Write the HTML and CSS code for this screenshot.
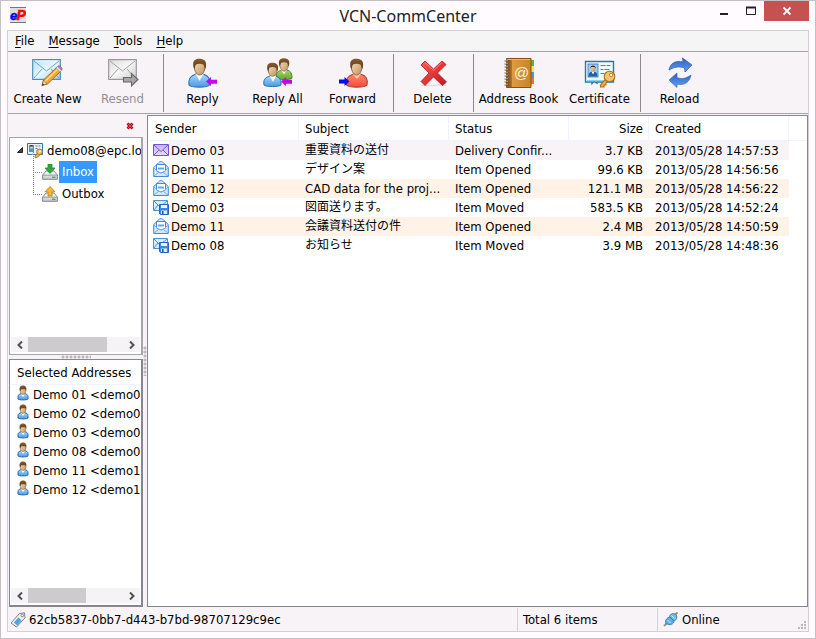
FILE: index.html
```html
<!DOCTYPE html>
<html lang="en">
<head>
<meta charset="utf-8">
<title>VCN-CommCenter</title>
<link rel="stylesheet" href="styles.css">
</head>
<body>
<svg class="sprite" aria-hidden="true">
  <defs>
    <linearGradient id="g-hair" x1="0" y1="0" x2="0" y2="1"><stop offset="0" stop-color="#8a5a2c"/><stop offset="1" stop-color="#5c3512"/></linearGradient>
    <linearGradient id="g-face" x1="0" y1="0" x2="1" y2="1"><stop offset="0" stop-color="#f4e0c0"/><stop offset="1" stop-color="#bf9460"/></linearGradient>
    <linearGradient id="g-blue" x1="0" y1="0" x2="0" y2="1"><stop offset="0" stop-color="#a8d8fa"/><stop offset="1" stop-color="#4a9ae4"/></linearGradient>
    <linearGradient id="g-green" x1="0" y1="0" x2="0" y2="1"><stop offset="0" stop-color="#a4d468"/><stop offset="1" stop-color="#68a830"/></linearGradient>
    <linearGradient id="g-red" x1="0" y1="0" x2="0" y2="1"><stop offset="0" stop-color="#ff8a70"/><stop offset="1" stop-color="#f24c34"/></linearGradient>
    <linearGradient id="g-mail" x1="0" y1="0" x2="1" y2="1"><stop offset="0" stop-color="#b8e0fa"/><stop offset=".5" stop-color="#e8f6ff"/><stop offset="1" stop-color="#a0d4f6"/></linearGradient>
    <linearGradient id="g-gray" x1="0" y1="0" x2="1" y2="1"><stop offset="0" stop-color="#dcdcdc"/><stop offset=".5" stop-color="#f6f6f6"/><stop offset="1" stop-color="#cccccc"/></linearGradient>
    <linearGradient id="g-x" x1="0" y1="0" x2="1" y2="1"><stop offset="0" stop-color="#f85c50"/><stop offset="1" stop-color="#c81420"/></linearGradient>
    <linearGradient id="g-book" x1="0" y1="0" x2="1" y2="0"><stop offset="0" stop-color="#8f5718"/><stop offset=".2" stop-color="#a8681c"/><stop offset=".22" stop-color="#dc9c44"/><stop offset="1" stop-color="#c98428"/></linearGradient>
    <linearGradient id="g-sync" x1="0" y1="0" x2="0" y2="1"><stop offset="0" stop-color="#2c5cc0"/><stop offset="1" stop-color="#60a4f0"/></linearGradient>
    <linearGradient id="g-tray" x1="0" y1="0" x2="0" y2="1"><stop offset="0" stop-color="#ffffff"/><stop offset="1" stop-color="#c4c8cc"/></linearGradient>
    <linearGradient id="g-violet" x1="0" y1="0" x2="0" y2="1"><stop offset="0" stop-color="#c4b4fa"/><stop offset="1" stop-color="#e4dcff"/></linearGradient>
  </defs>
  <symbol id="i-head" viewBox="0 0 16 16">
    <path d="M4.700 5c0-5.300 7-5 6.700.2 0 3.200-1.500 5.300-3.300 5.300S4.700 8.300 4.700 5z" fill="url(#g-face)" stroke="#8c6238" stroke-width=".6"/>
    <path d="M4.600 7C2.800 1.500 5 .1 8.200.2c4 .1 4.900 3 3.400 6.800L10.700 4C9 3.300 7.200 3.200 5.600 4z" fill="url(#g-hair)"/>
  </symbol>
  <symbol id="i-small-user" viewBox="0 0 12 16">
    <path d="M1 14V11.500c0-1.500 1.200-2.300 3-2.800h4c1.800.5 3 1.300 3 2.800V14c-1 1.200-9 1.200-10 0z" fill="url(#g-blue)" stroke="#1f66b4"/>
    <path d="M4 9L6 12 8 9z" fill="#fff"/>
    <ellipse cx="6" cy="6" rx="2.800" ry="3.600" fill="url(#g-face)" stroke="#8c6238" stroke-width=".5"/>
    <path d="M3 6.500C1.500 2 4 .6 6 .6s4.500 1.400 3 5.900L8.500 4.200H4.300z" fill="url(#g-hair)"/>
  </symbol>
  <symbol id="i-card" viewBox="0 0 32 32">
    <path d="M1.500 4.500h28v20.500H13v1l-3-1.500-2 2V25H1.500z" fill="#eef8ff" stroke="#2878ac" stroke-width="1.400"/>
    <path d="M3 23.700h24" stroke="#78c8ec"/>
    <rect x="4" y="7" width="10" height="13" fill="#9ccdf4" stroke="#3a78b0" stroke-width=".8"/>
    <path d="M4.500 19.500c0-4 2-5 4.500-5s4.500 1 4.500 5z" fill="#1c60b4"/><path d="M7.500 14.500l1.500 3 1.500-3z" fill="#fff"/>
    <ellipse cx="9" cy="11.500" rx="2.300" ry="3" fill="url(#g-face)"/><path d="M6.500 11.500c-1-4 6-4 5 0l-1-1.500h-3z" fill="#4b2c12"/>
    <path d="M16.500 8.500h5m1 0h4M16.500 12.500h3m1 0h5M16.500 16.500h4" stroke="#5583a8" stroke-width="1.200"/>
    <path d="M22.500 21l-6 7v2h3.500v-2h2v-2.200l4-2.800z" fill="#f2b24c" stroke="#a86e1c" stroke-width="1.100"/>
    <circle cx="25.500" cy="19.500" r="5.300" fill="#f8c468" stroke="#a86e1c" stroke-width="1.100"/><circle cx="27" cy="18" r="1.700" fill="#fff" stroke="#a86e1c" stroke-width=".8"/>
  </symbol>
  <symbol id="i-small-card" viewBox="0 0 16 16">
    <path d="M.5 1.500h15v11h-9l-1-.5-1 1v-.5h-4z" fill="#e4f3fd" stroke="#2878ac"/>
    <path d="M2 3h5v7H2z" fill="#4c94d8"/><circle cx="4.500" cy="5.200" r="1.500" fill="#f0cca0"/><path d="M3 4.500C3 2.500 6 2.500 6 4.500z" fill="#4b2c12"/>
    <path d="M8.500 4h2m1 0h2M8.500 6.500h2" stroke="#5583a8"/>
    <path d="M11 10.500l-3 3.500v1.500h2l3.500-3z" fill="#f2b24c" stroke="#a86e1c" stroke-width=".8"/>
    <circle cx="12.500" cy="9.800" r="2.800" fill="#f8c468" stroke="#a86e1c" stroke-width=".9"/><circle cx="13" cy="9.300" r=".9" fill="#fff"/>
  </symbol>
  <symbol id="i-opened" viewBox="0 0 16 16">
    <path d="M.7 6.500L5 2.500C6.500 0 9.500 0 11 2.500l4.300 4v9H.7z" fill="#d0e9fc" stroke="#4588d8"/>
    <path d="M3.500 3.500h9V10L8 12l-4.500-2z" fill="#fff" stroke="#4588d8"/>
    <path d="M5 6.500h6v2H5z" fill="#5ca8f0"/>
    <path d="M1 7l4.500 4.500L1 15M15 7l-4.500 4.500L15 15M5.500 11.500h5" fill="none" stroke="#78aee8"/>
  </symbol>
  <symbol id="i-moved" viewBox="0 0 16 16">
    <path d="M.5 1.500h14v10H.5z" fill="#d5ecfc" stroke="#4b94d0"/><path d="M1 2l6 6 7-6M1 11l4-5" fill="none" stroke="#4b94d0"/>
    <path d="M6.500 5.500h9v10h-8l-1-1z" fill="#3c86ec" stroke="#2860c8"/><path d="M8 6h6v3H8z" fill="#f4f8ff"/><path d="M8 11.500h6v3.500H8z" fill="#d8f0dc"/><path d="M9 12h1.500v3H9z" fill="#1c50b4"/>
  </symbol>
  <symbol id="i-new" viewBox="0 0 16 16">
    <path d="M.5 2.500h15v11H.5z" fill="url(#g-violet)" stroke="#7452d4"/><path d="M1 3l7 6.500L15 3M1 13l5-5m9 5l-5-5" fill="none" stroke="#7c5cdc"/>
  </symbol>
  <symbol id="i-tray" viewBox="0 0 16 16">
    <path d="M.6 11L4 7h8l3.400 4v4.300H.6z" fill="url(#g-tray)" stroke="#84888c"/><path d="M1 11.200h14" stroke="#9a9ea2"/><path d="M10 13.300h3.500" stroke="#48b040" stroke-width="1.400"/>
  </symbol>
  <symbol id="i-left" viewBox="0 0 10 8"><path d="M0 4l4.500-4v2.500H10v3.500H4.500V8z" fill="#c800f4"/></symbol>
</svg>

<div class="window">
  <header class="titlebar">
    <svg class="app-logo" viewBox="0 0 16 16" role="img" aria-label="eP">
      <path d="M0 0h16v16H0z" fill="#dedede"/><path d="M0 .5h16M0 15.500h16" stroke="#777"/>
      <text x="0" y="13" font-family="Liberation Sans" font-size="13" font-weight="bold" font-style="italic" fill="#00f" stroke="#00f" stroke-width=".4">e</text>
      <text x="6.500" y="13" font-family="Liberation Sans" font-size="14" font-weight="bold" font-style="italic" fill="#f00" stroke="#f00" stroke-width=".6">P</text>
    </svg>
    <h1 class="title">VCN-CommCenter</h1>
    <div class="controls">
      <button class="control" aria-label="Minimize"><svg viewBox="0 0 10 10"><path d="M1 8h8" stroke="#222" stroke-width="2"/></svg></button>
      <button class="control" aria-label="Maximize"><svg viewBox="0 0 10 10"><path d="M0 1.500h10" stroke="#222" stroke-width="2"/><path d="M.5 1v7.500h9V1" fill="none" stroke="#222"/></svg></button>
      <button class="control control-close" aria-label="Close"><svg viewBox="0 0 10 10"><path d="M1.500 1.500l7 7m0-7l-7 7" stroke="#fff" stroke-width="1.800"/></svg></button>
    </div>
  </header>

  <div class="client">
    <nav class="menubar">
      <button><u>F</u>ile</button><button><u>M</u>essage</button><button><u>T</u>ools</button><button><u>H</u>elp</button>
    </nav>

    <div class="toolbar" role="toolbar">
      <button class="tool">
        <svg viewBox="0 0 32 32"><path d="M.7 2.700h27.600v19.600H.7z" fill="url(#g-mail)" stroke="#4c8fb8" stroke-width="1.200"/><path d="M2 4l12.500 10L27 4M2 21l8-9m17 9l-8-9" fill="none" stroke="#5d9ec4" stroke-width=".9"/><path d="M3.200 4h23" stroke="#fff" opacity=".7"/>
          <path d="M10 28.500l1.500-5.500L25 10l4 4-13.500 13z" fill="#f7a52c" stroke="#9a6420" stroke-width=".9"/><path d="M13 24.500L26.500 11.500" stroke="#ffd98a" stroke-width="1.500"/><path d="M10 28.500l1.500-5.300 3.600 3.600z" fill="#f8dcb0" stroke="#74512a" stroke-width=".6"/><path d="M10 28.500l.7-2.200 1.500 1.500z" fill="#333"/><path d="M24 11l1.800-1.800 4 4L28 15z" fill="#d4dce4" stroke="#828a94" stroke-width=".5"/><path d="M25.800 9.200c1.600-1.600 5.600 2 4 4z" fill="#d878b0" stroke="#9c5880" stroke-width=".7"/></svg>
        Create New</button>
      <button class="tool" disabled>
        <svg viewBox="0 0 32 32"><path d="M1.700 2.700h27.600v19.600H1.700z" fill="url(#g-gray)" stroke="#999" stroke-width="1.200"/><path d="M3 4l12.500 10L28 4M3 21l8-9m17 9l-8-9" fill="none" stroke="#999" stroke-width=".9"/><path d="M16.500 20.500h8v-4l6.500 6-6.500 6.500v-4h-8z" fill="#a6a6a6" stroke="#666" stroke-width="1.100"/></svg>
        Resend</button>
      <span class="divider"></span>
      <button class="tool">
        <svg viewBox="0 0 32 32"><path d="M2 28c-1-6 1-9 7-11h7c6 2 7.500 5 6.500 11-2 2.800-18.500 2.800-20.500 0z" fill="url(#g-blue)" stroke="#2870b4" stroke-width="1.100"/><path d="M8.500 17l4 7 4-7z" fill="#fff" stroke="#b0cfe8" stroke-width=".5"/><use href="#i-head" x="0" y="1" width="25" height="26"/><use href="#i-left" x="19" y="20" width="11" height="9"/></svg>
        Reply</button>
      <button class="tool">
        <svg viewBox="0 0 32 32"><path d="M14 21c0-5 2-7 6-8h5c4 1 5 4 5 8-1 2-14 2-16 0z" fill="url(#g-green)" stroke="#4c8424"/><path d="M19 12.500l3 5 3-5z" fill="#fff"/><use href="#i-head" x="12" y="1" width="20" height="20"/><path d="M2 28c-1-5 1-7.500 6-9h5c5 1.500 6.500 4 6 9-2 2-15 2-17 0z" fill="url(#g-blue)" stroke="#2870b4"/><path d="M8 19l3 6 3-6z" fill="#fff"/><use href="#i-head" x="0" y="5" width="21" height="22"/><use href="#i-left" x="19" y="20" width="11" height="9"/></svg>
        Reply All</button>
      <button class="tool">
        <svg viewBox="0 0 32 32"><path d="M9.500 28c-1-6 1-9 7-11h7c6 2 7.500 5 6.500 11-2 2.800-18.500 2.800-20.500 0z" fill="url(#g-red)" stroke="#b43c2c" stroke-width="1.100"/><path d="M16 17l4 5 4-5z" fill="#ffc4b0"/><use href="#i-head" x="7" y="1" width="25" height="26"/><path d="M2 22.500h5.500V20l5 4.500-5 4.500v-2.500H2z" fill="#0808f0"/></svg>
        Forward</button>
      <span class="divider"></span>
      <button class="tool">
        <svg viewBox="0 0 32 32"><path d="M4 29c4-2 5 1 8-1 4 2 11-2 17 1" fill="none" stroke="#ddd5dc"/><path d="M4 8l4-4 8.500 8L25 4l4 3.500-8.500 8.500 9 9-4 3.500-9-8.500L8 28.500l-4-4L12 16z" fill="url(#g-x)" stroke="#b81820" stroke-width=".8"/><path d="M8 5.500l8.500 8L25 5.500" fill="none" stroke="#ff8c80" stroke-width=".9"/></svg>
        Delete</button>
      <span class="divider"></span>
      <button class="tool tool-wide">
        <svg viewBox="0 0 32 32"><path d="M27 3h4v6h-4z" fill="#54b848"/><path d="M27 9h4v6h-4z" fill="#f4dc78"/><path d="M27 15h4v6h-4z" fill="#3c9cec"/><path d="M27 21h4v6h-4z" fill="#ee7040"/><path d="M3.500 1.500h24.500v29H3.500z" fill="url(#g-book)" stroke="#8a5012"/><path d="M4.500 2.500h22.500" stroke="#ecb868"/><path d="M1.500 4h5m-5 3h5m-5 3h5m-5 3h5m-5 3h5m-5 3h5m-5 3h5m-5 3h5m-5 3h5" stroke="#54504c" stroke-width="1.100"/><path d="M2 3.300h3m-3 3h3m-3 3h3m-3 3h3m-3 3h3m-3 3h3m-3 3h3m-3 3h3m-3 3h3" stroke="#eee" stroke-width=".5"/><text x="11" y="20.500" font-family="Liberation Sans" font-size="15" fill="#fff0d4">@</text></svg>
        Address Book</button>
      <button class="tool"><svg viewBox="0 0 32 32"><use href="#i-card"/></svg>Certificate</button>
      <span class="divider"></span>
      <button class="tool">
        <svg viewBox="0 0 32 32"><path d="M5 13C6 6 12 3 19 5l-.5-4L28 8l-7 7-.5-4c-6-2-10-1-15.500 2z" fill="url(#g-sync)" stroke="#2858b0" stroke-width=".7"/><path d="M27 18c-1 7-7 11-14 9v3.500L5 23l8-7v4.500c5 2 9 1 14-2.500z" fill="url(#g-sync)" stroke="#3870c4" stroke-width=".7"/></svg>
        Reload</button>
    </div>

    <main class="content">
      <aside class="side">
        <div class="side-head"><button aria-label="Close pane"><svg viewBox="0 0 8 8"><path d="M1.500 1.500l5 5m0-5l-5 5" stroke="#a80c18" stroke-width="2.800"/><path d="M1.500 1.500l5 5m0-5l-5 5" stroke="#dc5058" stroke-width="1"/></svg></button></div>
        <section class="pane tree-pane">
          <ul class="tree">
            <li><div class="node root"><svg class="expander" viewBox="0 0 8 8"><path d="M6.500 1.500v5h-5z" fill="#444" stroke="#222"/></svg><svg class="icon" viewBox="0 0 16 16"><use href="#i-small-card"/></svg><span>demo08@epc.lo</span></div>
              <ul class="branch">
                <li class="node"><svg class="icon" viewBox="0 0 16 16"><use href="#i-tray"/><path d="M6 0h4v4h3L8 9.500 3 4h3z" fill="#30a838" stroke="#1c7c28" stroke-width=".7"/></svg><span class="label selected">Inbox</span></li>
                <li class="node"><svg class="icon" viewBox="0 0 16 16"><use href="#i-tray"/><path d="M8 .5l5 5.300h-3V10H6V5.800H3z" fill="#fbb838" stroke="#b87c18" stroke-width=".8"/></svg><span class="label">Outbox</span></li>
              </ul>
            </li>
          </ul>
          <div class="scrollbar"><button aria-label="Scroll left"><svg viewBox="0 0 8 8"><path d="M6 .5L2.500 4 6 7.500" /></svg></button><div class="track"><div class="thumb thumb-long"></div></div><button aria-label="Scroll right"><svg viewBox="0 0 8 8"><path d="M2 .5L5.500 4 2 7.500"/></svg></button></div>
        </section>
        <div class="split-row"></div>
        <section class="pane address-pane">
          <h2>Selected Addresses</h2>
          <ul class="addresses">
            <li><svg viewBox="0 0 12 16"><use href="#i-small-user"/></svg>Demo 01 &lt;demo0</li>
            <li><svg viewBox="0 0 12 16"><use href="#i-small-user"/></svg>Demo 02 &lt;demo0</li>
            <li><svg viewBox="0 0 12 16"><use href="#i-small-user"/></svg>Demo 03 &lt;demo0</li>
            <li><svg viewBox="0 0 12 16"><use href="#i-small-user"/></svg>Demo 08 &lt;demo0</li>
            <li><svg viewBox="0 0 12 16"><use href="#i-small-user"/></svg>Demo 11 &lt;demo1</li>
            <li><svg viewBox="0 0 12 16"><use href="#i-small-user"/></svg>Demo 12 &lt;demo1</li>
          </ul>
          <div class="scrollbar"><button aria-label="Scroll left"><svg viewBox="0 0 8 8"><path d="M6 .5L2.500 4 6 7.500"/></svg></button><div class="track"><div class="thumb"></div></div><button aria-label="Scroll right"><svg viewBox="0 0 8 8"><path d="M2 .5L5.500 4 2 7.500"/></svg></button></div>
        </section>
      </aside>
      <div class="split-col"></div>
      <section class="list-pane">
        <table class="mails">
          <colgroup><col class="c-sender"><col class="c-subject"><col class="c-status"><col class="c-size"><col class="c-created"><col></colgroup>
          <thead><tr><th>Sender</th><th>Subject</th><th>Status</th><th class="num">Size</th><th>Created</th><th></th></tr></thead>
          <tbody>
            <tr class="current"><td><svg viewBox="0 0 16 16"><use href="#i-new"/></svg>Demo 03</td><td lang="ja">重要資料の送付</td><td>Delivery Confir...</td><td class="num">3.7 KB</td><td>2013/05/28 14:57:53</td><td></td></tr>
            <tr><td><svg viewBox="0 0 16 16"><use href="#i-opened"/></svg>Demo 11</td><td lang="ja">デザイン案</td><td>Item Opened</td><td class="num">99.6 KB</td><td>2013/05/28 14:56:56</td><td></td></tr>
            <tr class="tinted"><td><svg viewBox="0 0 16 16"><use href="#i-opened"/></svg>Demo 12</td><td>CAD data for the proj...</td><td>Item Opened</td><td class="num">121.1 MB</td><td>2013/05/28 14:56:22</td><td></td></tr>
            <tr><td><svg viewBox="0 0 16 16"><use href="#i-moved"/></svg>Demo 03</td><td lang="ja">図面送ります。</td><td>Item Moved</td><td class="num">583.5 KB</td><td>2013/05/28 14:52:24</td><td></td></tr>
            <tr class="tinted"><td><svg viewBox="0 0 16 16"><use href="#i-opened"/></svg>Demo 11</td><td lang="ja">会議資料送付の件</td><td>Item Opened</td><td class="num">2.4 MB</td><td>2013/05/28 14:50:59</td><td></td></tr>
            <tr><td><svg viewBox="0 0 16 16"><use href="#i-moved"/></svg>Demo 08</td><td lang="ja">お知らせ</td><td>Item Moved</td><td class="num">3.9 MB</td><td>2013/05/28 14:48:36</td><td></td></tr>
          </tbody>
        </table>
      </section>
    </main>

    <footer class="statusbar">
      <div class="status status-id"><svg viewBox="0 0 16 16"><path d="M1 11L9.500 1.500l5-.7.500 5L6.500 15z" fill="#f0f2f4" stroke="#7c8084"/><path d="M4 10.500l4.500-5 3 3-4.500 5z" fill="#3c98d8"/><path d="M5 11.500l4.500-5m-3 6l4.500-5" stroke="#90ccf0" stroke-width=".6"/><circle cx="12.300" cy="3.500" r="1.300" fill="#fff" stroke="#7c8084"/></svg>62cb5837-0bb7-d443-b7bd-98707129c9ec</div>
      <div class="status status-total">Total 6 items</div>
      <div class="status status-online"><svg viewBox="0 0 16 16"><path d="M1 14l2.500-2.500M12 3l2.500-2.500" stroke="#9a9490" stroke-width="2"/><path d="M3 11.500C1.500 8.500 4 5.500 7 5l4 4c0 3-4 5-8 2.500z" fill="#5cb0ec" stroke="#2c70a8" stroke-width=".8"/><path d="M6.500 4.500C7 1.500 11 .8 12.800 2.500c2 2 1 5.500-1.800 6.300z" fill="#6cbcf2" stroke="#2c70a8" stroke-width=".8"/><path d="M4.500 8l3 3M8.500 3.500l3 3" stroke="#d0ecff"/></svg>Online</div>
      <svg class="grip" viewBox="0 0 8 8"><path d="M6 0h2v2H6zM6 3h2v2H6zM6 6h2v2H6zM3 3h2v2H3zM3 6h2v2H3zM0 6h2v2H0z" fill="#bdb8bd"/></svg>
    </footer>
  </div>
</div>
</body>
</html>
```
FILE: styles.css
```css
* { box-sizing: border-box; }

body {
  margin: 0;
  color: #000;
  font: 13px/19px "DejaVu Sans Condensed", "Noto Sans CJK JP", sans-serif;
}

button {
  margin: 0;
  padding: 0;
  border: 0;
  background: none;
  color: inherit;
  font: inherit;
}

ul { margin: 0; padding: 0; list-style: none; }
svg { display: block; flex: none; }
.sprite { position: absolute; width: 0; height: 0; }

.window {
  display: flex;
  flex-direction: column;
  height: 100vh;
  padding: 0 6px 6px;
  border: 1px solid #c5c0c5;
  background: #fffbff;
}

/* Title bar */
.titlebar {
  display: grid;
  grid-template-columns: 1fr auto 1fr;
  flex: none;
  height: 29px;
}
.app-logo { width: 16px; height: 16px; margin: 6px 0 0 3px; }
.title {
  margin: 0;
  padding-top: 5px;
  color: #222;
  font: 16px/20px "Noto Sans", sans-serif;
}
.controls { display: flex; justify-content: flex-end; height: 20px; }
.control { display: grid; place-items: center; width: 27px; }
.control svg { width: 10px; height: 10px; }
.control-close { width: 45px; background: #c75050; }

/* Client area */
.client {
  display: flex;
  flex: 1;
  flex-direction: column;
  min-height: 0;
  border: 1px solid #d3cfd3;
  background: #f7f3f7;
}
.menubar {
  display: flex;
  flex: none;
  gap: 14px;
  height: 21px;
  padding: 0 0 1px 7px;
  border-bottom: 1px solid #a5a2a5;
  background: #f5f5f5;
}
.menubar u { text-underline-offset: 2px; }

/* Toolbar */
.toolbar {
  display: flex;
  flex: none;
  height: 62px;
  padding: 2px 2px 1px;
  border-bottom: 1px solid #a5a2a5;
}
.tool {
  display: flex;
  flex: none;
  flex-direction: column;
  align-items: center;
  width: 75px;
  padding-top: 3px;
  white-space: nowrap;
}
.tool svg { width: 32px; height: 32px; }
.tool-wide { width: 87px; }
.tool:disabled { color: #949094; }
.divider { width: 1px; margin: 0 1px 0 3px; background: #8c8a8c; }

/* Panes */
.content { display: flex; flex: 1; min-height: 0; padding-top: 1px; }
.side { display: flex; flex: none; flex-direction: column; width: 135px; padding-left: 1px; }
.side-head { display: flex; flex: none; align-items: center; justify-content: flex-end; height: 22px; padding-right: 9px; }
.side-head svg { width: 8px; height: 8px; }
.pane {
  display: flex;
  flex-direction: column;
  min-height: 0;
  border: 1px solid #848694;
  border-right-width: 2px;
  background: #fff;
}
.tree-pane { flex: 218; border-color: #a5a6ad; }
.address-pane { flex: 247; border-bottom-width: 2px; }
.split-row,
.split-col {
  flex: none;
  align-self: center;
  width: 30px;
  height: 4px;
  background: radial-gradient(circle at 2px 2px, #bdb8bd 1px, transparent 2px) 0 0 / 4px 4px;
}
.split-col { width: 4px; height: 30px; }

/* Folder tree */
.tree { flex: 1; padding-top: 1px; overflow: hidden; white-space: nowrap; }
.node { display: flex; align-items: center; height: 22px; }
.root { padding-left: 6px; }
.expander { width: 8px; height: 8px; margin-right: 3px; }
.icon { width: 16px; height: 16px; }
.root span { margin-left: 4px; }
.branch { margin-left: 23px; }
.branch .node { position: relative; padding-left: 9px; }
.branch .node::before {
  position: absolute;
  top: -11px;
  left: 0;
  width: 8px;
  height: 22px;
  border: dotted #848284;
  border-width: 0 0 1px 1px;
  content: "";
}
.label { height: 22px; margin-left: 1px; padding: 0 3px; line-height: 21px; }
.selected { background: #3399ff; color: #fff; }

/* Scroll bars */
.scrollbar { display: flex; flex: none; height: 15px; margin: 0 1px 2px; background: #f5f3f5; }
.scrollbar button { display: grid; place-items: center; width: 17px; }
.scrollbar svg { width: 8px; height: 8px; fill: none; stroke: #525052; stroke-width: 2; }
.track { flex: 1; }
.thumb { width: 61%; height: 100%; background: #cecbce; }
.thumb-long { width: 83%; }

/* Addresses */
.address-pane h2 {
  flex: none;
  height: 25px;
  margin: 0 1px;
  padding: 3px 6px 0;
  border-bottom: 1px solid #eff3ff;
  font: inherit;
  white-space: nowrap;
}
.addresses { flex: 1; min-height: 0; overflow: hidden; }
.addresses li { display: flex; gap: 4px; height: 19px; padding-left: 7px; white-space: nowrap; }
.addresses svg { width: 12px; height: 16px; }

/* Message list */
.list-pane {
  flex: 1;
  min-width: 0;
  padding: 0 1px;
  overflow: hidden;
  border: 1px solid #848694;
  background: #fff;
}
.mails { width: 100%; border-collapse: separate; border-spacing: 0; table-layout: fixed; }
.c-sender, .c-subject { width: 150px; }
.c-status { width: 120px; }
.c-size { width: 80px; }
.c-created { width: 140px; }
.mails th {
  height: 25px;
  padding: 0 5px 0 6px;
  border: solid #eff3ff;
  border-width: 0 1px 1px 0;
  font-weight: normal;
  text-align: left;
}
.mails th:last-child { border-right: 0; }
.mails td {
  height: 19px;
  padding: 0 6px;
  overflow: hidden;
  text-overflow: ellipsis;
  white-space: nowrap;
}
.mails .num { text-align: right; }
.mails td:first-child { padding-left: 4px; }
.mails td svg { float: left; width: 16px; height: 16px; margin: 1px 2px 0 0; }
.mails [lang="ja"] { font-size: 12px; }
.current td:not(:last-child) { background: #f7f3f7; }
.tinted td:not(:last-child) { background: #fff3e7; }
.current td:first-child { background: linear-gradient(90deg, #fff 20px, #f7f3f7 20px); }
.tinted td:first-child { background: linear-gradient(90deg, #fff 20px, #fff3e7 20px); }

/* Status bar */
.statusbar { display: flex; flex: none; height: 24px; padding: 1px 2px 0 0; }
.status { display: flex; align-items: center; gap: 3px; padding-left: 5px; white-space: nowrap; }
.status svg { width: 16px; height: 16px; }
.status-id { flex: 1; padding-left: 2px; }
.status-total { width: 140px; border-left: 1px solid #d6d3d6; }
.status-online { width: 141px; border-left: 1px solid #d6d3d6; }
.grip { align-self: flex-end; width: 8px; height: 8px; margin-bottom: 2px; }
```
